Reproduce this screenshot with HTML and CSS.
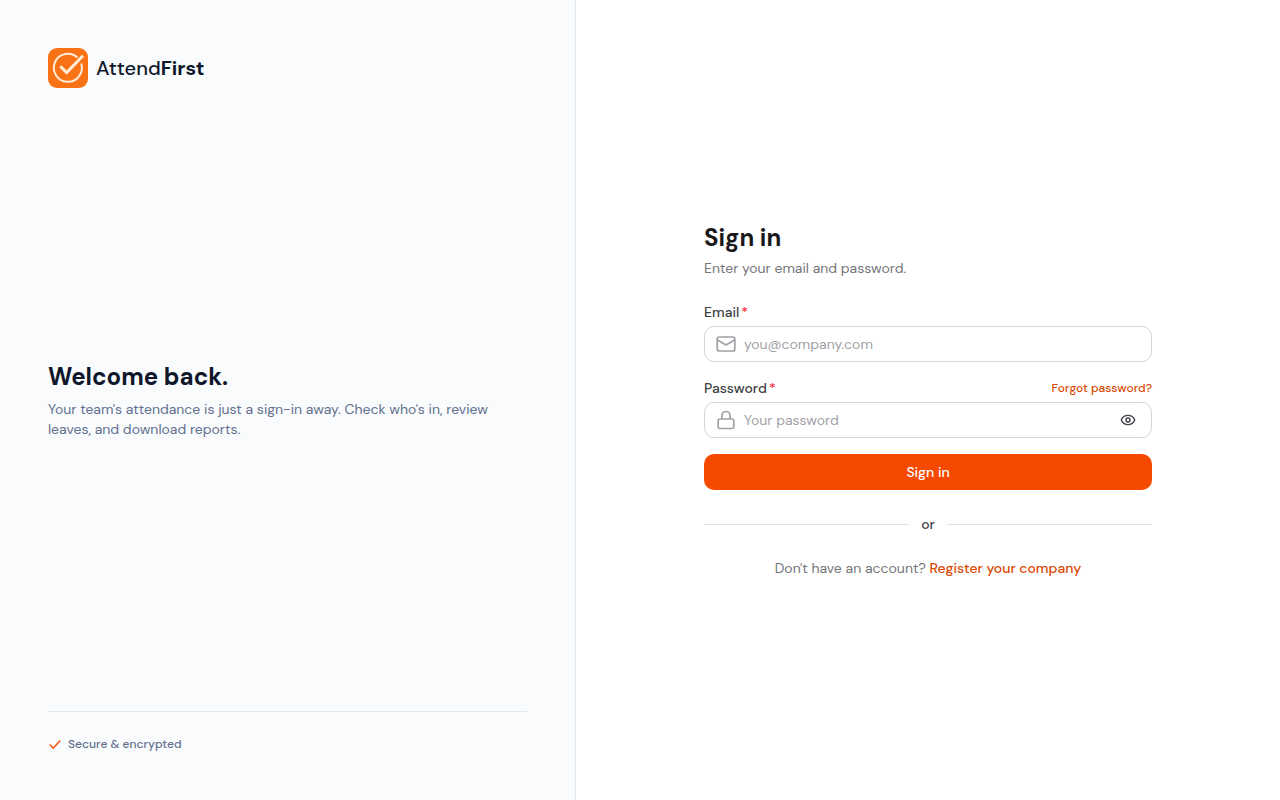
FILE: index.html
```html
<!DOCTYPE html>
<html lang="en">
<head>
    <meta charset="UTF-8">
    <meta name="viewport" content="width=device-width, initial-scale=1.0">
    <title>Sign in - AttendFirst</title>
    <link rel="stylesheet" href="styles.css">
</head>
<body>
    <div class="layout">
        <aside class="side">
            <a class="brand" href="#">
                <svg class="brand-mark" viewBox="0 0 40 40" fill="none" stroke="#ffedd5" aria-hidden="true">
                    <rect width="40" height="40" rx="9" fill="#f97316" stroke="none"/>
                    <path d="M29.5 9.600A14 14 0 1 0 33.200 15.500" stroke-width="2"/>
                    <path d="M12.300 18.200l6.300 6.300L35 7.800" stroke-width="3"/>
                </svg>
                <span class="brand-name">Attend<strong>First</strong></span>
            </a>
            <div class="intro">
                <h2 class="title title-navy">Welcome back.</h2>
                <p class="intro-text">Your team's attendance is just a sign-in away. Check who's in, review leaves, and download reports.</p>
            </div>
            <div class="side-footer">
                <svg class="check" viewBox="0 0 24 24" fill="none" stroke="currentColor" stroke-width="2.5" aria-hidden="true">
                    <path d="M3 13l6 6L21 6"/>
                </svg>
                <span>Secure &amp; encrypted</span>
            </div>
        </aside>

        <main class="main">
            <form class="form">
                <div class="form-header">
                    <h1 class="title">Sign in</h1>
                    <p class="muted">Enter your email and password.</p>
                </div>

                <div class="fields">
                    <div class="field">
                        <div class="label-row">
                            <label class="label" for="email">Email<span class="required">*</span></label>
                        </div>
                        <div class="input-box">
                            <svg class="input-icon" viewBox="0 0 20 20" fill="none" stroke="currentColor" stroke-width="1.7" stroke-linejoin="round" aria-hidden="true">
                                <rect x="1.200" y="3" width="17.600" height="14" rx="2"/>
                                <path d="M1.500 6l8.500 5 8.500-5" stroke-linecap="round"/>
                            </svg>
                            <input class="input" type="email" id="email" placeholder="you@company.com">
                        </div>
                    </div>

                    <div class="field">
                        <div class="label-row">
                            <label class="label" for="password">Password<span class="required">*</span></label>
                            <a class="forgot" href="#">Forgot password?</a>
                        </div>
                        <div class="input-box">
                            <svg class="input-icon" viewBox="0 0 20 20" fill="none" stroke="currentColor" stroke-width="1.7" aria-hidden="true">
                                <rect x="2.200" y="9" width="15.600" height="9.500" rx="1.500"/>
                                <path d="M6 9V5.500a4 4 0 0 1 8 0V9"/>
                            </svg>
                            <input class="input" type="password" id="password" placeholder="Your password">
                            <button class="toggle" type="button" aria-label="Show password">
                                <svg class="eye" viewBox="0 0 16 16" fill="none" stroke="currentColor" stroke-width="1.4" aria-hidden="true">
                                    <path d="M1.300 8C2.500 5 5 3.400 8 3.400S13.500 5 14.700 8C13.500 11 11 12.600 8 12.600S2.500 11 1.300 8Z"/>
                                    <circle cx="8" cy="8" r="2"/>
                                </svg>
                            </button>
                        </div>
                    </div>

                    <button class="submit" type="submit">Sign in</button>
                </div>

                <div class="divider">or</div>

                <p class="muted register">Don't have an account? <a class="register-link" href="#">Register your company</a></p>
            </form>
        </main>
    </div>
</body>
</html>
```
FILE: styles.css
```css
* {
    box-sizing: border-box;
}
body {
    margin: 0;
    font-family: "DM Sans", Inter, sans-serif;
    font-size: 14px;
    line-height: 20px;
    color: #3f3f46;
    background-color: #fff;
}
h1, h2, p {
    margin: 0;
}
a {
    color: #d94a05;
    text-decoration: none;
}
svg {
    display: block;
    flex-shrink: 0;
}
button, input {
    font: inherit;
}
.layout {
    display: flex;
    min-height: 100vh;
}

/* Left panel */
.side {
    width: 45%;
    padding: 48px;
    display: flex;
    flex-direction: column;
    justify-content: space-between;
    background-color: #f9fbfd;
    border-right: 1px solid #e2e8f0;
}
.brand {
    display: flex;
    align-items: center;
    gap: 8px;
    color: #0f172b;
}
.brand-mark {
    width: 40px;
    height: 40px;
}
.brand-name {
    font-size: 20px;
    line-height: 28px;
    font-weight: 500;
}
.brand-name strong {
    font-weight: 700;
}
.title {
    font-size: 24px;
    line-height: 32px;
    font-weight: 700;
    color: #18181b;
}
.title-navy {
    color: #0f172b;
}
.intro-text {
    max-width: 448px;
    margin-top: 6px;
    color: #62708e;
}
.side-footer {
    display: flex;
    align-items: center;
    gap: 6px;
    padding-top: 24px;
    border-top: 1px solid #e2e8f0;
    font-size: 12px;
    line-height: 16px;
    font-weight: 500;
    color: #62708e;
}
.check {
    width: 14px;
    height: 14px;
    color: #ea580c;
}

/* Sign in form */
.main {
    flex: 1;
    display: flex;
    align-items: center;
    justify-content: center;
    padding: 24px;
}
.form {
    width: 100%;
    max-width: 448px;
    display: flex;
    flex-direction: column;
    gap: 24px;
}
.form-header, .field {
    display: flex;
    flex-direction: column;
    gap: 4px;
}
.fields {
    display: flex;
    flex-direction: column;
    gap: 16px;
}
.muted {
    color: #75757a;
}
.label-row {
    display: flex;
    align-items: center;
    justify-content: space-between;
}
.label {
    font-weight: 500;
}
.required {
    margin-left: 2px;
    color: #fb2c36;
}
.forgot {
    font-size: 12px;
    line-height: 16px;
    font-weight: 500;
}
.input-box {
    display: flex;
    align-items: center;
    gap: 8px;
    height: 36px;
    padding: 0 11px;
    border: 1px solid #d4d4d8;
    border-radius: 10px;
}
.input-box:focus-within {
    border-color: #f54900;
}
.input-icon {
    width: 20px;
    height: 20px;
    color: #a1a1a6;
}
.input {
    flex: 1;
    min-width: 0;
    padding: 0;
    border: none;
    outline: none;
    background: none;
    color: #18181b;
}
.input::placeholder {
    color: #a1a1a6;
}
.toggle {
    padding: 4px;
    border: none;
    background: none;
    color: #3f3f46;
    cursor: pointer;
}
.eye {
    width: 16px;
    height: 16px;
}
.submit {
    height: 36px;
    border: none;
    border-radius: 10px;
    background-color: #f54900;
    color: #fff;
    font-weight: 500;
    cursor: pointer;
}
.submit:hover {
    background-color: #ca3500;
}
.divider {
    display: flex;
    align-items: center;
    gap: 12px;
    font-weight: 500;
}
.divider::before, .divider::after {
    content: "";
    flex: 1;
    height: 1px;
    background-color: #e4e4e7;
}
.register {
    text-align: center;
}
.register-link {
    font-weight: 500;
}
```
